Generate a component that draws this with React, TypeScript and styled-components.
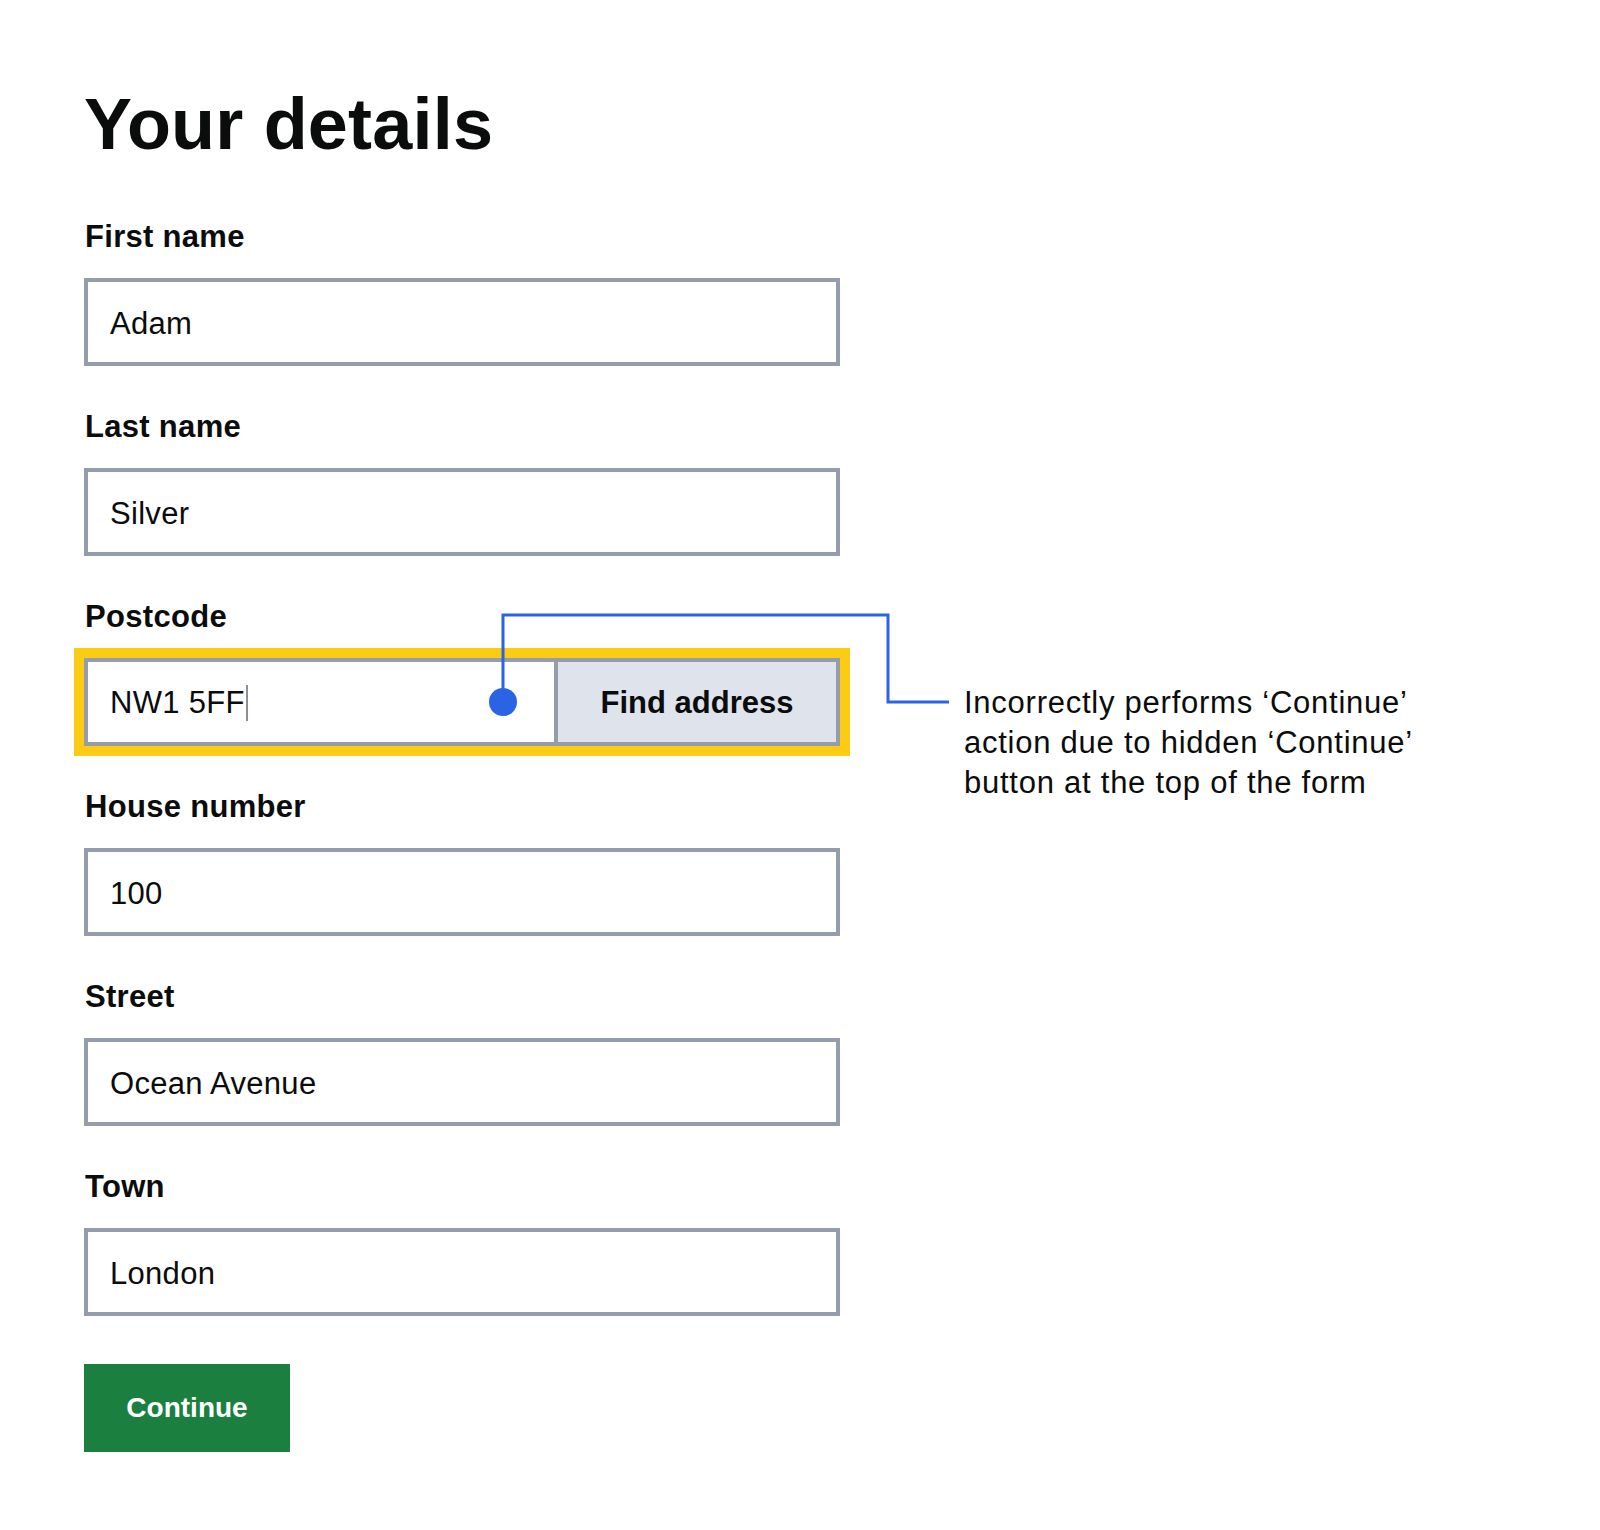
import * as React from 'react';
import styled, { createGlobalStyle } from 'styled-components';

// ______________________________________________________
//
// @ Global

const GlobalStyle = createGlobalStyle`
  html, body {
    margin: 0;
    padding: 0;
    background: #ffffff;
  }
  body {
    font-family: "Liberation Sans", Arial, Helvetica, sans-serif;
    color: #0b0c0c;
  }
`;

// ______________________________________________________
//
// @ Styled parts

const Page = styled.main`
  box-sizing: border-box;
  width: 1600px;
  min-height: 1530px;
  padding: 88px 0 0 84px;
`;

const Heading = styled.h1`
  margin: 0 0 59px;
  font-size: 72px;
  line-height: 72px;
  font-weight: 700;
  letter-spacing: 0.2px;
`;

const Form = styled.form`
  display: flex;
  flex-direction: column;
  gap: 43px;
`;

const Field = styled.div`
  display: flex;
  flex-direction: column;
  gap: 23px;
`;

const Label = styled.label`
  display: block;
  font-size: 31px;
  line-height: 36px;
  font-weight: 700;
  letter-spacing: 0.3px;
  padding-left: 1px;
`;

const TextBox = styled.div`
  box-sizing: border-box;
  display: flex;
  align-items: center;
  width: 756px;
  height: 88px;
  padding: 3px 22px 0;
  border: 4px solid #959cab;
  background: #ffffff;
  font-size: 31px;
  letter-spacing: 0.3px;
`;

// the note hangs beside the group without growing the row
const Row = styled.div`
  position: relative;
  display: flex;
  align-items: flex-start;
  height: 88px;
`;

const InputGroup = styled.div`
  box-sizing: border-box;
  flex: none;
  display: flex;
  width: 756px;
  height: 88px;
  border: 4px solid #959cab;
  box-shadow: 0 0 0 10px #fccb14;
`;

const GroupInput = styled.div`
  flex: 1;
  display: flex;
  align-items: center;
  padding: 2px 22px 0;
  background: #ffffff;
  font-size: 31px;
  letter-spacing: 0.3px;
`;

const Caret = styled.span`
  display: inline-block;
  width: 2px;
  height: 36px;
  margin-left: 1px;
  background: #8a8f99;
`;

const FindButton = styled.button`
  width: 282px;
  border: 0;
  border-left: 4px solid #959cab;
  background: #dee3ec;
  font-family: inherit;
  font-size: 31px;
  font-weight: 700;
  color: #0b0c0c;
  padding: 2px 0 0;
`;

const Note = styled.p`
  flex: none;
  margin: 25px 0 0 124px;
  font-size: 31px;
  line-height: 40px;
  letter-spacing: 0.75px;
  color: #0b0c0c;
`;

const Connector = styled.svg`
  position: absolute;
  top: -50px;
  left: 0;
  overflow: visible;
  pointer-events: none;
`;

const ContinueButton = styled.button`
  align-self: flex-start;
  margin-top: 5px;
  width: 206px;
  height: 88px;
  border: 0;
  background: #1b7f40;
  color: #ffffff;
  font-family: inherit;
  font-size: 28px;
  font-weight: 700;
  padding: 0;
`;

// ______________________________________________________
//
// @ Data

type FieldData = { label: string; value: string };

const before: FieldData[] = [
  { label: 'First name', value: 'Adam' },
  { label: 'Last name', value: 'Silver' },
];

const after: FieldData[] = [
  { label: 'House number', value: '100' },
  { label: 'Street', value: 'Ocean Avenue' },
  { label: 'Town', value: 'London' },
];

const renderField = ({ label, value }: FieldData) => (
  <Field key={label}>
    <Label>{label}</Label>
    <TextBox>{value}</TextBox>
  </Field>
);

// ______________________________________________________
//
// @ View

const App: React.FC = () => (
  <>
    <GlobalStyle />
    <Page>
      <Heading>Your details</Heading>
      <Form onSubmit={(e) => e.preventDefault()}>
        {before.map(renderField)}
        <Field>
          <Label>Postcode</Label>
          <Row>
            <InputGroup>
              <GroupInput>
                NW1 5FF
                <Caret />
              </GroupInput>
              <FindButton type="button">Find address</FindButton>
            </InputGroup>
            <Note>
              Incorrectly performs ‘Continue’
              <br />
              action due to hidden ‘Continue’
              <br />
              button at the top of the form
            </Note>
            <Connector width="870" height="110" viewBox="0 0 870 110">
              <path
                d="M419 94 V7 H804 V94 H865"
                fill="none"
                stroke="#2a63e4"
                strokeWidth="3"
              />
              <circle cx="419" cy="94" r="14" fill="#2a63e4" />
            </Connector>
          </Row>
        </Field>
        {after.map(renderField)}
        <ContinueButton type="submit">Continue</ContinueButton>
      </Form>
    </Page>
  </>
);

export default App;
